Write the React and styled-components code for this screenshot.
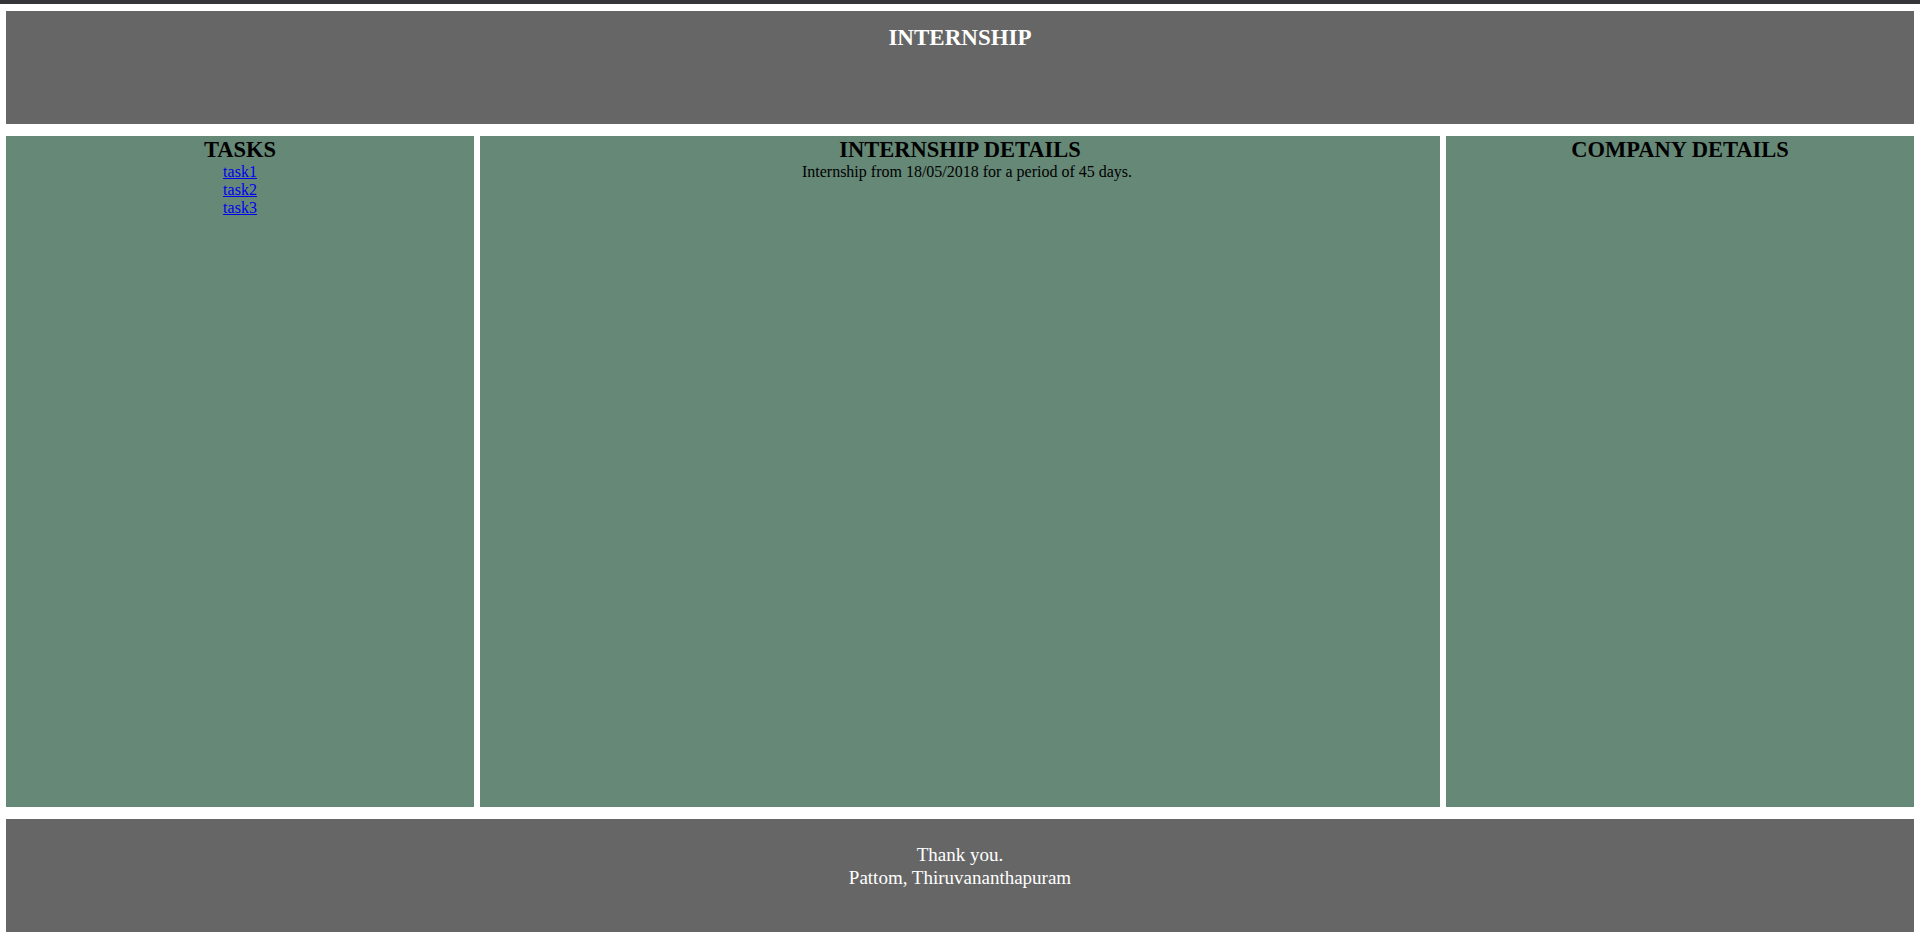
import React from 'react';
import styled, { createGlobalStyle } from 'styled-components';

const GlobalStyle = createGlobalStyle`
    html, body {
        margin: 0;
        padding: 0;
        background: #ffffff;
        font-family: "Liberation Serif", "Times New Roman", serif;
    }
`;

const TopStrip = styled.div`
    height: 4px;
    background: #36363a;
`;

const Page = styled.div`
    display: flex;
    flex-direction: column;
    gap: 12px;
    padding: 7px 6px 0 6px;
`;

const Banner = styled.header`
    height: 113px;
    box-sizing: border-box;
    padding-top: ${props => props.top}px;
    background: #666666;
    color: #ffffff;
    text-align: center;
`;

const BannerTitle = styled.h2`
    margin: 0;
    font-size: 23px;
    font-weight: bold;
    line-height: 26px;
`;

const BannerLine = styled.div`
    font-size: 19px;
    line-height: 22.5px;
`;

const Columns = styled.main`
    display: grid;
    grid-template-columns: 468px 960px 468px;
    gap: 6px;
    height: 671px;
`;

const Column = styled.section`
    background: #668877;
    text-align: center;
    padding-top: 1px;
`;

const ColumnTitle = styled.h3`
    margin: 0;
    font-size: 22.5px;
    font-weight: bold;
    color: #000000;
    line-height: 26px;
`;

const TaskList = styled.div`
    display: flex;
    flex-direction: column;
    align-items: center;
`;

const TaskLink = styled.a`
    font-size: 16px;
    line-height: 18px;
    color: #0000ee;
    text-decoration: underline;
`;

const Note = styled.p`
    margin: 0;
    padding-left: 14px;
    font-size: 16px;
    line-height: 18px;
    color: #000000;
`;

function App() {
    const tasks = ['task1', 'task2', 'task3'];
    return (
        <>
            <GlobalStyle />
            <TopStrip />
            <Page>
                <Banner top={14}>
                    <BannerTitle>INTERNSHIP</BannerTitle>
                </Banner>
                <Columns>
                    <Column>
                        <ColumnTitle>TASKS</ColumnTitle>
                        <TaskList>
                            {tasks.map(t => (
                                <TaskLink key={t} href="#">{t}</TaskLink>
                            ))}
                        </TaskList>
                    </Column>
                    <Column>
                        <ColumnTitle>INTERNSHIP DETAILS</ColumnTitle>
                        <Note>Internship from 18/05/2018 for a period of 45 days.</Note>
                    </Column>
                    <Column>
                        <ColumnTitle>COMPANY DETAILS</ColumnTitle>
                    </Column>
                </Columns>
                <Banner top={25}>
                    <BannerLine>Thank you.</BannerLine>
                    <BannerLine>Pattom, Thiruvananthapuram</BannerLine>
                </Banner>
            </Page>
        </>
    );
}

export default App;
